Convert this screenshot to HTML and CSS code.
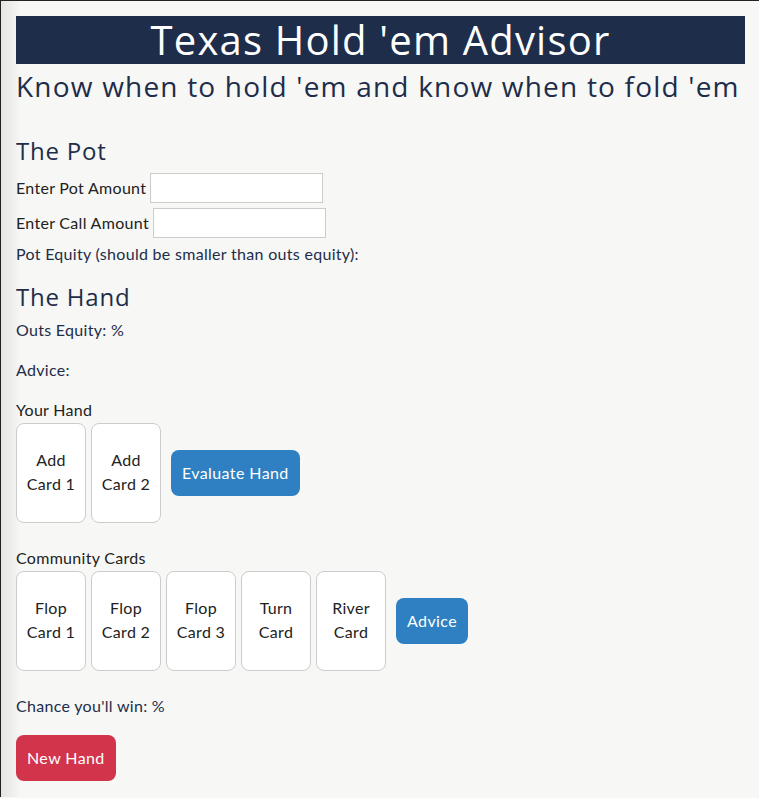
FILE: index.html
```html
<!DOCTYPE html>
<html lang="en">
<head>
<meta charset="utf-8">
<title>Texas Hold 'em Advisor</title>
<link rel="stylesheet" href="styles.css">
</head>
<body>
<div class="page">
  <h1 class="title">Texas Hold 'em Advisor</h1>
  <p class="subtitle">Know when to hold 'em and know when to fold 'em</p>

  <h2 class="section section-pot">The Pot</h2>
  <div class="field field-first">
    <label class="field-label" for="pot">Enter Pot Amount</label>
    <input class="field-input" id="pot" type="text">
  </div>
  <div class="field field-second">
    <label class="field-label" for="call">Enter Call Amount</label>
    <input class="field-input" id="call" type="text">
  </div>
  <p class="info info-pot">Pot Equity (should be smaller than outs equity):</p>

  <h2 class="section section-hand">The Hand</h2>
  <p class="info info-outs">Outs Equity: %</p>
  <p class="info info-advice">Advice:</p>

  <p class="label label-hand">Your Hand</p>
  <div class="card-row">
    <div class="card">Add<br>Card 1</div>
    <div class="card">Add<br>Card 2</div>
    <button class="btn btn-blue">Evaluate Hand</button>
  </div>

  <p class="label label-community">Community Cards</p>
  <div class="card-row">
    <div class="card">Flop<br>Card 1</div>
    <div class="card">Flop<br>Card 2</div>
    <div class="card">Flop<br>Card 3</div>
    <div class="card">Turn<br>Card</div>
    <div class="card">River<br>Card</div>
    <button class="btn btn-blue">Advice</button>
  </div>

  <p class="info info-chance">Chance you'll win: %</p>
  <button class="btn btn-red">New Hand</button>
</div>
</body>
</html>
```

FILE: styles.css
```css
html, body {
  margin: 0;
  padding: 0;
  background: #f7f7f5;
}
body {
  border-top: 1px solid #222;
  border-left: 1px solid #222;
  min-height: 797px;
  box-sizing: border-box;
  background: linear-gradient(to right, #e4e4e3 0, #f7f7f5 20px);
  font-family: "Lato", "Open Sans", sans-serif;
  font-size: 16px;
  letter-spacing: 0.3px;
  color: #222;
}
.page {
  padding: 15px 14px 0 15px;
}
.title {
  margin: 0;
  height: 48px;
  line-height: 47px;
  background: #1e2d4a;
  color: #ffffff;
  text-align: center;
  font-family: "Open Sans", sans-serif;
  font-weight: 400;
  font-size: 40px;
  letter-spacing: 1.2px;
}
.subtitle {
  margin: 6px 0 0;
  line-height: 33px;
  padding-bottom: 1px;
  font-family: "Open Sans", sans-serif;
  font-size: 28px;
  color: #1e2d4a;
  letter-spacing: 1.2px;
}
.section {
  margin: 0;
  line-height: 30px;
  font-family: "Open Sans", sans-serif;
  font-weight: 400;
  font-size: 24px;
  color: #1e2d4a;
  letter-spacing: 0.8px;
}
.section-pot { margin-top: 32px; }
.section-hand { margin-top: 16px; }

.field {
  display: flex;
  align-items: center;
  gap: 4px;
  height: 30px;
}
.field-first { margin-top: 7px; }
.field-second { margin-top: 5px; }
.field-label {
  color: #222;
  position: relative;
  top: -1px;
}
.field-input {
  box-sizing: border-box;
  width: 173px;
  height: 30px;
  margin: 0;
  border: 1px solid #ccc;
  background: #fff;
  padding: 0 6px;
  font: inherit;
}

.info {
  margin: 0;
  line-height: 23px;
  padding-bottom: 1px;
  color: #1e2d4a;
}
.info-pot { margin-top: 4px; }
.info-outs { margin-top: 6px; }
.info-advice { margin-top: 16px; }
.info-chance { margin-top: 23px; }

.label {
  margin: 0;
  line-height: 23px;
  padding-bottom: 1px;
  color: #222;
}
.label-hand { margin-top: 16px; }
.label-community { margin-top: 23px; }

.card-row {
  display: flex;
  align-items: center;
  gap: 5px;
  margin-top: 1px;
}
.card {
  box-sizing: border-box;
  width: 70px;
  height: 100px;
  padding-bottom: 2px;
  border: 1px solid #ccc;
  border-radius: 8px;
  background: #fff;
  display: flex;
  align-items: center;
  justify-content: center;
  text-align: center;
  line-height: 24px;
  color: #222;
}
.btn {
  box-sizing: border-box;
  height: 46px;
  margin: 0;
  border: none;
  border-radius: 8px;
  padding: 0 11px 2px;
  font-family: inherit;
  font-size: 16px;
  letter-spacing: 0.4px;
  color: #fff;
  cursor: pointer;
}
.card-row .btn { margin-left: 5px; }
.btn-blue { background: #2e80c2; }
.btn-red {
  display: block;
  margin-top: 17px;
  background: #d2344c;
}
```
